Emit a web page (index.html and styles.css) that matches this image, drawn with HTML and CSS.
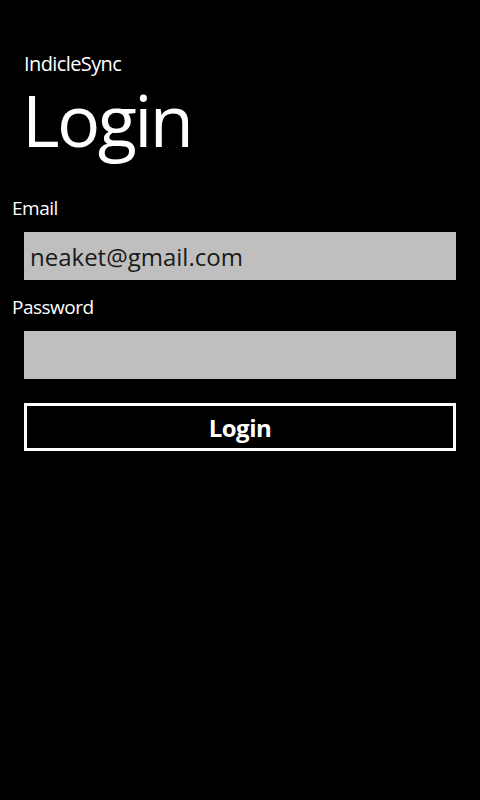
FILE: index.html
```html
<!DOCTYPE html>
<html>
<head>
<meta charset="utf-8">
<link rel="stylesheet" href="styles.css">
</head>
<body>
<div class="page">
  <div class="header">
    <div class="app-title">IndicleSync</div>
    <div class="page-title">Login</div>
  </div>
  <div class="form">
    <div class="label label-first">Email</div>
    <div class="field">neaket@gmail.com</div>
    <div class="label">Password</div>
    <div class="field"></div>
    <div class="button">Login</div>
  </div>
</div>
</body>
</html>
```

FILE: styles.css
```css
html, body {
  margin: 0;
  padding: 0;
  background: #000;
}
body {
  width: 480px;
  height: 800px;
  font-family: "Open Sans", "Noto Sans", sans-serif;
  color: #fff;
}
.page {
  padding-top: 50px;
}
.header {
  padding-left: 24px;
}
.app-title {
  font-size: 20px;
  line-height: 28px;
  letter-spacing: -0.6px;
}
.page-title {
  margin-top: 1px;
  font-size: 72px;
  line-height: 80px;
  letter-spacing: -2.6px;
  margin-left: -2px;
}
.form {
  display: flex;
  flex-direction: column;
  padding: 0 24px 0 12px;
}
.label {
  font-size: 19px;
  line-height: 24px;
  letter-spacing: -0.5px;
  margin-top: 15px;
}
.label-first {
  margin-top: 37px;
}
.field {
  box-sizing: border-box;
  margin: 12px 0 0 12px;
  height: 48px;
  background: #bfbfbf;
  color: #1a1a1a;
  font-size: 24px;
  line-height: 46px;
  padding: 2px 0 0 6px;
  letter-spacing: 0;
}
.button {
  box-sizing: border-box;
  margin: 24px 0 0 12px;
  height: 48px;
  border: 3px solid #fff;
  text-align: center;
  font-size: 24px;
  font-weight: 700;
  line-height: 41px;
  padding-top: 1px;
  letter-spacing: -0.5px;
}
```
